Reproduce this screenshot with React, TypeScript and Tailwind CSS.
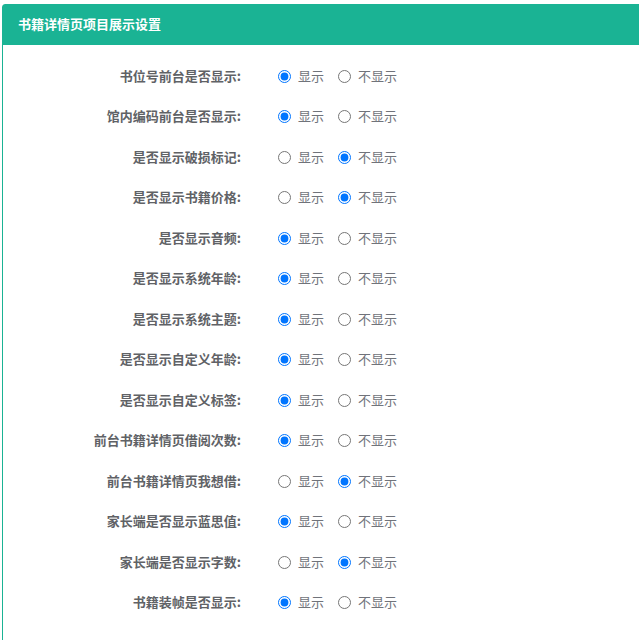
import React, { useState } from 'react';

type Item = { key: string; label: string; show: boolean };

const initialItems: Item[] = [
  { key: 'callNo', label: '书位号前台是否显示:', show: true },
  { key: 'innerCode', label: '馆内编码前台是否显示:', show: true },
  { key: 'damage', label: '是否显示破损标记:', show: false },
  { key: 'price', label: '是否显示书籍价格:', show: false },
  { key: 'audio', label: '是否显示音频:', show: true },
  { key: 'sysAge', label: '是否显示系统年龄:', show: true },
  { key: 'sysTheme', label: '是否显示系统主题:', show: true },
  { key: 'customAge', label: '是否显示自定义年龄:', show: true },
  { key: 'customTag', label: '是否显示自定义标签:', show: true },
  { key: 'borrowCount', label: '前台书籍详情页借阅次数:', show: true },
  { key: 'wantBorrow', label: '前台书籍详情页我想借:', show: false },
  { key: 'lansi', label: '家长端是否显示蓝思值:', show: true },
  { key: 'wordCount', label: '家长端是否显示字数:', show: false },
  { key: 'binding', label: '书籍装帧是否显示:', show: true },
];

const App: React.FC = () => {
  const [items, setItems] = useState<Item[]>(initialItems);

  const setShow = (key: string, show: boolean) => {
    setItems((prev) => prev.map((it) => (it.key === key ? { ...it, show } : it)));
  };

  return (
    <div
      className="w-full h-[640px] overflow-hidden bg-white pl-[2px] pt-[4px]"
      style={{ fontFamily: '"Microsoft YaHei", "Noto Sans CJK SC", sans-serif' }}
    >
      <div className="w-[660px] h-[700px] border border-[#1ab394] rounded-tl-[3px] bg-white">
        <div className="h-[40px] bg-[#1ab394] flex items-center pl-[15px] pb-[3px]">
          <h3 className="text-[13px] font-bold text-white">书籍详情页项目展示设置</h3>
        </div>

        <div className="pt-[10px]">
          {items.map((it) => (
            <div key={it.key} className="h-[40.5px] flex items-center">
              <div className="w-[238px] text-right text-[13px] font-bold text-[#606266]">{it.label}</div>
              <div className="flex items-center ml-[37px] text-[13px] text-[#70737a]">
                <label className="flex items-center gap-[7px] mr-[14px] cursor-pointer">
                  <input
                    type="radio"
                    name={it.key}
                    className="m-0 translate-y-[1px]"
                    checked={it.show}
                    onChange={() => setShow(it.key, true)}
                  />
                  <span>显示</span>
                </label>
                <label className="flex items-center gap-[7px] cursor-pointer">
                  <input
                    type="radio"
                    name={it.key}
                    className="m-0 translate-y-[1px]"
                    checked={!it.show}
                    onChange={() => setShow(it.key, false)}
                  />
                  <span>不显示</span>
                </label>
              </div>
            </div>
          ))}
        </div>
      </div>
    </div>
  );
};

export default App;
